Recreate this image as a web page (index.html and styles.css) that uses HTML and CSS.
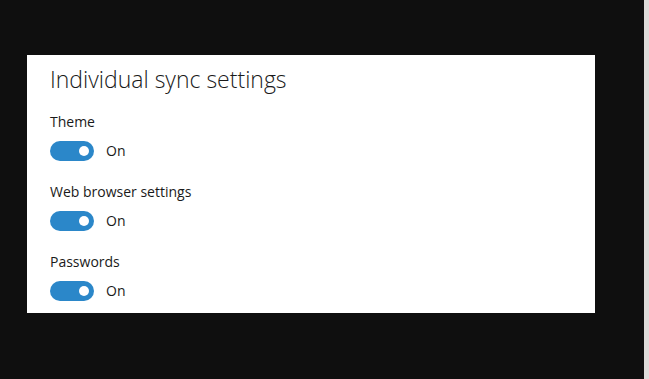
FILE: index.html
```html
<!DOCTYPE html>
<html>
  <head>
    <meta charset="UTF-8" />
    <title>Individual sync settings</title>
    <link rel="stylesheet" href="styles.css">
  </head>
  <body>
    <div class="screen">
      <div class="panel">
        <h1>Individual sync settings</h1>

        <div class="setting">
          <div class="setting-label">Theme</div>
          <div class="toggle-row">
            <span class="toggle on" role="switch" aria-checked="true"></span>
            <span class="toggle-text">On</span>
          </div>
        </div>

        <div class="setting">
          <div class="setting-label">Web browser settings</div>
          <div class="toggle-row">
            <span class="toggle on" role="switch" aria-checked="true"></span>
            <span class="toggle-text">On</span>
          </div>
        </div>

        <div class="setting">
          <div class="setting-label">Passwords</div>
          <div class="toggle-row">
            <span class="toggle on" role="switch" aria-checked="true"></span>
            <span class="toggle-text">On</span>
          </div>
        </div>
      </div>
      <div class="edge"></div>
    </div>
  </body>
</html>
```

FILE: styles.css
```css
:root {
  --bg-color: #0f0f0f;
  --panel-bg: #ffffff;
  --text-color: #1a1a1a;
  --accent: #2b87c9;
  --edge-color: #dedcda;
}

html,
body {
  margin: 0;
  height: 100%;
}

body {
  background-color: var(--bg-color);
  font-family: "Open Sans", "Noto Sans", sans-serif;
  color: var(--text-color);
  overflow: hidden;
}

.screen {
  display: flex;
  height: 379px;
}

.panel {
  width: 568px;
  height: 258px;
  margin: 55px 0 0 27px;
  box-sizing: border-box;
  padding: 9px 23px 0;
  background-color: var(--panel-bg);
}

.edge {
  margin-left: auto;
  width: 5px;
  background-color: var(--edge-color);
}

.panel h1 {
  margin: 0 0 18px;
  font-size: 23px;
  font-weight: 300;
  line-height: 30px;
}

.setting {
  height: 70px;
}

.setting-label {
  font-size: 14px;
  line-height: 20px;
}

.toggle-row {
  display: flex;
  align-items: center;
  gap: 12px;
  margin-top: 9px;
}

.toggle {
  position: relative;
  width: 44px;
  height: 20px;
  border-radius: 10px;
  background-color: var(--accent);
}

.toggle::after {
  content: '';
  position: absolute;
  top: 5px;
  right: 5px;
  width: 10px;
  height: 10px;
  border-radius: 50%;
  background-color: #ffffff;
}

.toggle-text {
  font-size: 14px;
  line-height: 20px;
}
```
